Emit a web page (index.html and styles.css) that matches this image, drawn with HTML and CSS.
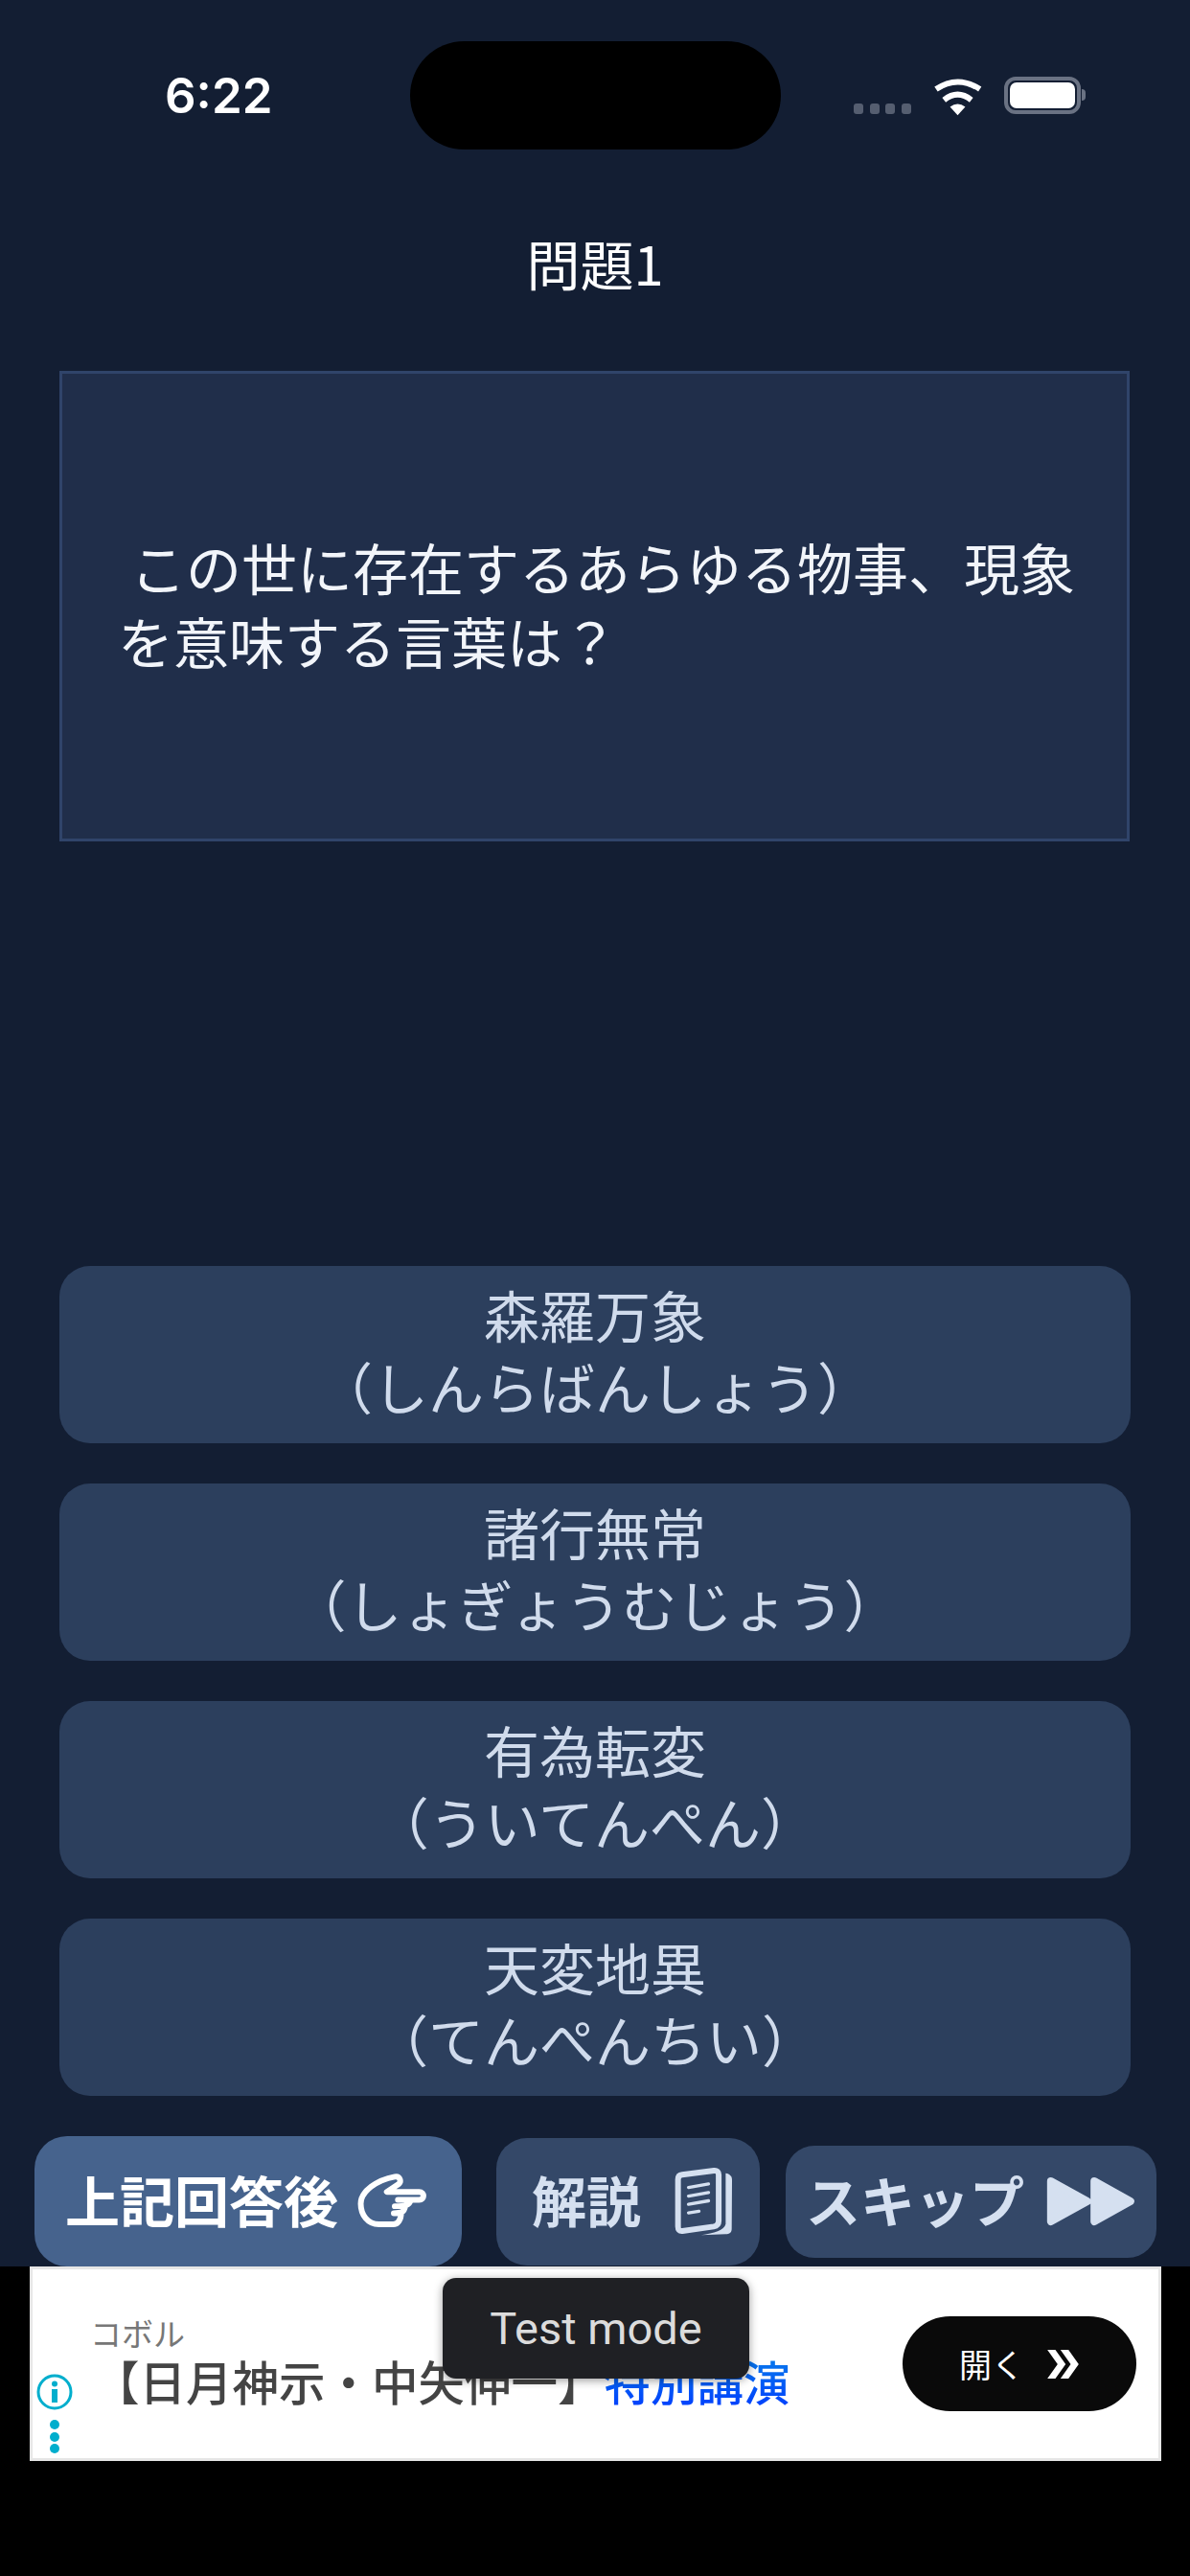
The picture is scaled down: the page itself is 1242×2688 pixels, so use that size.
FILE: index.html
```html
<!DOCTYPE html>
<html lang="ja">
<head>
  <meta charset="UTF-8">
  <meta name="viewport" content="width=device-width, initial-scale=1.0">
  <title>問題1</title>
  <link rel="stylesheet" href="styles.css">
</head>
<body>
  <div class="app">
    <div class="screen">
      <div class="status">
        <span class="time">6:22</span>
        <div class="island"></div>
        <div class="signal"><i></i><i></i><i></i><i></i></div>
        <svg class="wifi" viewBox="368 90 160 120">
          <path d="M380 126 Q448 80 518 126" fill="none" stroke="#fff" stroke-width="18"/>
          <path d="M405 160 Q448 126 491 160" fill="none" stroke="#fff" stroke-width="18"/>
          <path d="M424 182 Q448 164 472 182 L448 208 Z" fill="#fff"/>
        </svg>
        <div class="battery"><div class="battery-level"></div></div>
        <div class="battery-cap"></div>
      </div>

      <h1 class="title">問題1</h1>

      <div class="question">
        <p>&nbsp;この世に存在するあらゆる物事、現象<br>を意味する言葉は？</p>
      </div>

      <div class="answers">
        <button class="answer">森羅万象<br>（しんらばんしょう）</button>
        <button class="answer">諸行無常<br>（しょぎょうむじょう）</button>
        <button class="answer">有為転変<br>（ういてんぺん）</button>
        <button class="answer">天変地異<br>（てんぺんちい）</button>
      </div>

      <div class="actions">
        <button class="action next"><span class="label">上記回答後</span>
          <svg class="icon-hand" viewBox="95 145 225 175">
            <path d="M210 305 H165 C130 305 108 275 108 240 C108 200 160 165 215 155 C232 152 238 172 225 180 L190 203 H292 C310 203 310 228 292 228 H225 M265 228 C262 245 250 248 215 248 M248 248 C245 268 235 270 212 270 M235 270 C235 290 225 305 210 305" fill="none" stroke="#fff" stroke-width="18" stroke-linecap="round" stroke-linejoin="round"/>
          </svg>
        </button>
        <button class="action explain"><span class="label">解説</span>
          <svg class="icon-doc" viewBox="98 128 190 224">
            <path d="M262 150 C276 152 282 160 282 172 L281 325 C281 336 274 342 262 342 L185 345 C225 338 258 330 262 310 Z" fill="#d5e0f0"/>
            <path d="M125 155 L225 142 C235 141 240 146 240 155 L240 300 C240 312 234 316 224 318 L126 332 C116 333 112 328 112 318 L112 170 C112 161 116 156 125 155 Z" fill="none" stroke="#d5e0f0" stroke-width="18"/>
            <path d="M145 195 L208 184 M145 222 L208 211 M145 248 L208 237 M145 275 L178 270" fill="none" stroke="#d5e0f0" stroke-width="10" stroke-linecap="round"/>
          </svg>
        </button>
        <button class="action skip"><span class="label">スキップ</span>
          <svg class="icon-skip" viewBox="38 62 278 156">
            <path d="M52 77 L166 140 L52 203 Z M188 77 L301 140 L188 203 Z" fill="#d5e0f0" stroke="#d5e0f0" stroke-width="24" stroke-linejoin="round"/>
          </svg>
        </button>
      </div>
    </div>

    <div class="ad-area">
      <div class="ad">
        <div class="ad-info">
          <svg class="icon-info" viewBox="0 0 38 38">
            <circle cx="19" cy="19" r="17" fill="none" stroke="#00aecd" stroke-width="3"/>
            <circle cx="19" cy="10.5" r="3" fill="#00aecd"/>
            <rect x="16" y="16" width="6" height="14" fill="#00aecd"/>
          </svg>
          <div class="ad-dots"><i></i><i></i><i></i></div>
        </div>
        <div class="ad-text">
          <div class="ad-brand">コボル</div>
          <div class="ad-headline">【日月神示・中矢伸一】<span class="ad-link">特別講演</span></div>
        </div>
        <button class="ad-open">開く
          <svg class="icon-more" viewBox="100 153 98 90">
            <path d="M100 153 H125 L157 198 L125 243 H100 L132 198 Z M141 153 H166 L198 198 L166 243 H141 L173 198 Z" fill="#fff"/>
          </svg>
        </button>
      </div>
      <div class="toast">Test mode</div>
    </div>
  </div>
</body>
</html>
```

FILE: styles.css
```css
:root {
  --bg: #131e33;
  --panel: #202e4a;
  --panel-line: #30446a;
  --answer: #2c3f5d;
  --text: #d0dbec;
  --icon: #d5e0f0;
  --cjk: "Noto Sans CJK JP", "Noto Sans", sans-serif;
}
body {
  margin: 0;
  background: #000;
  font-family: var(--cjk);
}
button {
  border: none;
  padding: 0;
  font-family: inherit;
}
.app {
  width: 1242px;
  height: 2688px;
  display: flex;
  flex-direction: column;
  overflow: hidden;
}
.screen {
  height: 2365px;
  background: var(--bg);
  display: flex;
  flex-direction: column;
}

/* status bar */
.status {
  height: 113px;
  padding: 43px 0 0 172px;
  display: flex;
  align-items: flex-start;
}
.time {
  width: 256px;
  margin-top: 31px;
  color: #fff;
  font: 600 51px/52px Inter, sans-serif;
}
.island {
  width: 387px;
  height: 113px;
  background: #000;
  border-radius: 57px;
}
.signal {
  margin: 65px 0 0 76px;
  display: flex;
  gap: 6.5px;
}
.signal i {
  width: 10px;
  height: 11px;
  background: #555e70;
  border-radius: 3px;
}
.wifi {
  width: 53px;
  height: 40px;
  margin: 38px 0 0 22px;
}
.battery {
  width: 80px;
  height: 39px;
  margin: 37px 0 0 22px;
  box-sizing: border-box;
  border: 4px solid #6a7283;
  border-radius: 12px;
  padding: 2px;
}
.battery-level {
  height: 100%;
  background: #fff;
  border-radius: 7px;
}
.battery-cap {
  width: 4px;
  height: 12px;
  margin: 50px 0 0 1px;
  background: #6a7283;
  border-radius: 0 4px 4px 0;
}

.title {
  margin: 83px 0 0;
  color: #fff;
  font-size: 56px;
  font-weight: 400;
  line-height: 70px;
  text-align: center;
}
.question {
  height: 491px;
  margin: 78px 63px 0 62px;
  box-sizing: border-box;
  background: var(--panel);
  border: 3px solid var(--panel-line);
  display: flex;
  align-items: center;
  padding: 0 0 5px 58px;
}
.question p {
  margin: 0;
  color: #f2f5fa;
  font-size: 58px;
  line-height: 77px;
  white-space: nowrap;
}

.answers {
  margin: auto 62px 0;
  display: flex;
  flex-direction: column;
  gap: 42px;
}
.answer {
  height: 185px;
  padding-bottom: 9px;
  background: var(--answer);
  border-radius: 32px;
  color: var(--text);
  font-size: 58px;
  line-height: 75px;
  text-align: center;
}

/* bottom buttons */
.actions {
  margin-top: 42px;
  padding-left: 36px;
  height: 136px;
  display: flex;
  align-items: center;
}
.action {
  display: flex;
  align-items: center;
  font-size: 57px;
  font-weight: 700;
  color: var(--icon);
  background: #344868;
  white-space: nowrap;
}
.label {
  margin-bottom: 6px;
}
.next {
  width: 446px;
  height: 136px;
  padding-left: 32px;
  box-sizing: border-box;
  border-radius: 34px;
  background: #46638d;
  color: #fff;
}
.explain {
  width: 275px;
  height: 133px;
  margin-left: 36px;
  padding-left: 37px;
  box-sizing: border-box;
  border-radius: 32px;
}
.skip {
  width: 387px;
  height: 117px;
  margin-left: 27px;
  padding-left: 21px;
  box-sizing: border-box;
  border-radius: 30px;
}
.icon-hand {
  width: 75px;
  height: 58px;
  margin-left: 19px;
}
.icon-doc {
  width: 63px;
  height: 75px;
  margin-left: 34px;
}
.icon-skip {
  width: 93px;
  height: 52px;
  margin-left: 23px;
}

/* ad banner */
.ad-area {
  flex: 1;
  position: relative;
  background: #000;
}
.ad {
  height: 203px;
  margin: 0 30px 0 31px;
  box-sizing: border-box;
  background: #fff;
  border: 3px solid #e6e6e6;
  display: flex;
}
.ad-info {
  width: 63px;
  padding: 109px 0 0 4px;
  box-sizing: border-box;
}
.icon-info {
  width: 38px;
  height: 38px;
  display: block;
}
.ad-dots {
  width: 38px;
  margin-top: 10px;
  display: flex;
  flex-direction: column;
  align-items: center;
  gap: 2.5px;
}
.ad-dots i {
  width: 10px;
  height: 10px;
  background: #00aecd;
  border-radius: 50%;
}
.ad-text {
  padding-top: 46px;
}
.ad-brand {
  margin-left: -3px;
  color: #777;
  font-size: 33px;
  line-height: 40px;
}
.ad-headline {
  color: #444;
  font-size: 48.5px;
  font-weight: 500;
  line-height: 60px;
  white-space: nowrap;
}
.ad-link {
  background: linear-gradient(#0a86e8, #0038ff);
  -webkit-background-clip: text;
  background-clip: text;
  color: transparent;
}
.ad-open {
  width: 244px;
  height: 99px;
  margin: 49px 23px 0 auto;
  background: #0a0a0a;
  border-radius: 50px;
  color: #fff;
  font-size: 34px;
  display: flex;
  align-items: center;
  padding-left: 59px;
  box-sizing: border-box;
}
.icon-more {
  width: 33px;
  height: 30px;
  margin-left: 24px;
}
.toast {
  position: absolute;
  left: 462px;
  top: 12px;
  width: 320px;
  height: 105px;
  background: #1f2024;
  border-radius: 14px;
  box-shadow: 0 2px 10px #0006;
  color: #dcdcdc;
  font: 400 47px/105px Roboto, sans-serif;
  text-align: center;
}
```
